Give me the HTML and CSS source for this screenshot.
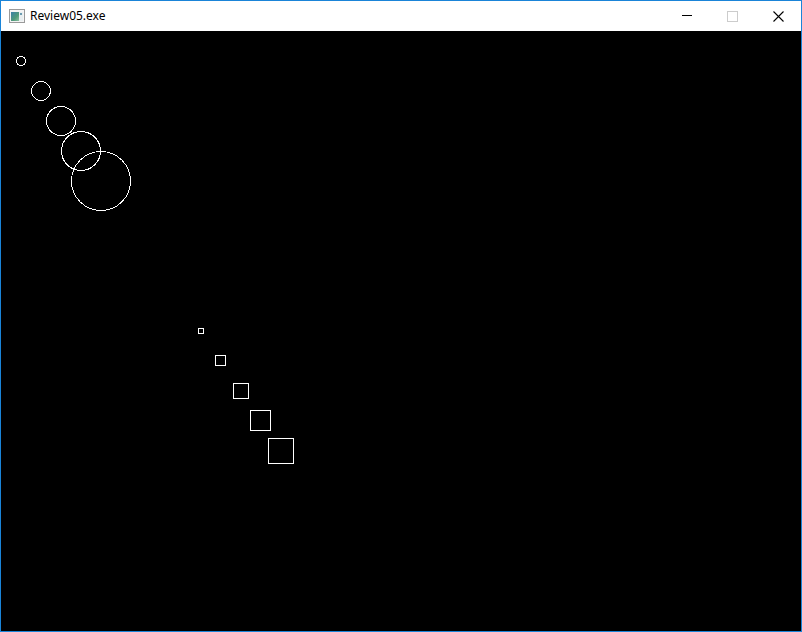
FILE: index.html
```html
<!DOCTYPE html>
<html>
<head>
<meta charset="utf-8">
<title>Review05.exe</title>
<link rel="stylesheet" href="styles.css">
</head>
<body>
<div class="window">
  <div class="titlebar">
    <svg class="app-icon" width="16" height="16" viewBox="0 0 16 16">
      <rect x="0.5" y="0.5" width="15" height="13" fill="#f4f4f4" stroke="#9a9a9a"/>
      <rect x="2" y="3" width="8" height="9" fill="url(#g)"/>
      <rect x="10" y="3" width="4" height="9" fill="#e8eef0"/>
      <rect x="11" y="4" width="2" height="2" fill="#6b9bb0"/>
      <defs>
        <linearGradient id="g" x1="0" y1="0" x2="1" y2="1">
          <stop offset="0" stop-color="#3b7fa8"/>
          <stop offset="0.6" stop-color="#4f9a7a"/>
          <stop offset="1" stop-color="#8cc0a0"/>
        </linearGradient>
      </defs>
    </svg>
    <span class="title">Review05.exe</span>
    <div class="controls">
      <div class="ctrl ctrl-min">
        <svg width="10" height="10" viewBox="0 0 10 10"><rect x="0" y="4" width="10" height="1" fill="#000"/></svg>
      </div>
      <div class="ctrl">
        <svg width="11" height="11" viewBox="0 0 11 11" shape-rendering="crispEdges"><rect x="0.5" y="0.5" width="10" height="10" fill="none" stroke="#cccccc"/></svg>
      </div>
      <div class="ctrl">
        <svg width="11" height="11" viewBox="0 0 11 11"><path d="M0.5 0.5 L10.5 10.5 M10.5 0.5 L0.5 10.5" stroke="#000" stroke-width="1.1" fill="none"/></svg>
      </div>
    </div>
  </div>
  <div class="client">
    <svg class="canvas" width="800" height="600" viewBox="0 0 800 600">
      <g fill="none" stroke="#fff" stroke-width="1" shape-rendering="crispEdges">
        <circle cx="20" cy="30" r="4.5"/>
        <circle cx="40" cy="60" r="9.5"/>
        <circle cx="60" cy="90" r="14.5"/>
        <circle cx="80" cy="120" r="19.5"/>
        <circle cx="100" cy="150" r="29.5"/>
      </g>
      <g fill="none" stroke="#fff" stroke-width="1" shape-rendering="crispEdges">
        <rect x="197.5" y="297.5" width="5" height="5"/>
        <rect x="214.5" y="324.5" width="10" height="10"/>
        <rect x="232.5" y="352.5" width="15" height="15"/>
        <rect x="249.5" y="379.5" width="20" height="20"/>
        <rect x="267.5" y="407.5" width="25" height="25"/>
      </g>
    </svg>
  </div>
</div>
</body>
</html>
```

FILE: styles.css
```css
html, body {
  margin: 0;
  padding: 0;
  background: #ffffff;
}

.window {
  width: 800px;
  height: 630px;
  border: 1px solid #1a84d8;
  display: flex;
  flex-direction: column;
  overflow: hidden;
}

.titlebar {
  height: 30px;
  flex: none;
  background: #ffffff;
  display: flex;
  align-items: center;
  padding-left: 8px;
  font-family: "Noto Sans", "Open Sans", sans-serif;
  font-size: 12px;
  color: #000;
}

.app-icon {
  flex: none;
  margin-top: 1px;
}

.title {
  margin-left: 5px;
  line-height: 16px;
}

.controls {
  margin-left: auto;
  display: flex;
  height: 30px;
}

.ctrl {
  width: 46px;
  height: 30px;
  display: flex;
  align-items: center;
  justify-content: center;
}

.ctrl-min {
  padding-left: 2px;
  box-sizing: border-box;
}

.ctrl svg {
  display: block;
}

.client {
  flex: none;
  height: 600px;
  background: #000000;
}

.canvas {
  display: block;
}
```
